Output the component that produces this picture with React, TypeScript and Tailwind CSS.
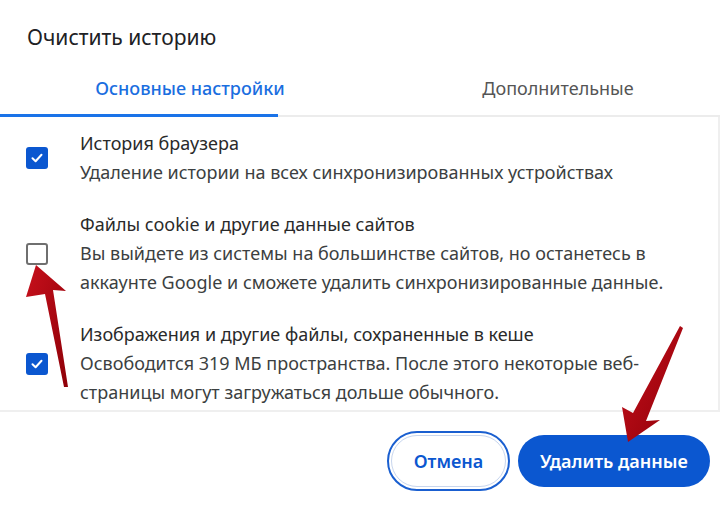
import React from "react";

const Check = ({ checked }: { checked: boolean }) =>
  checked ? (
    <div className="w-[22px] h-[22px] rounded-[3px] bg-[#0b57d0] flex items-center justify-center shrink-0">
      <svg width="14" height="14" viewBox="0 0 14 14">
        <path d="M2.5 7.3 L5.6 10.2 L11.5 3.8" fill="none" stroke="white" strokeWidth="2" strokeLinecap="round" strokeLinejoin="round" />
      </svg>
    </div>
  ) : (
    <div className="w-[22px] h-[22px] rounded-[3px] border-[2.5px] border-[#6f6f6f] bg-white shrink-0" />
  );

const Item = ({ checked, title, lines }: { checked: boolean; title: string; lines: string[] }) => (
  <div className="flex items-center">
    <div className="w-[80px] pl-[26px] flex">
      <Check checked={checked} />
    </div>
    <div className="text-[18px] leading-[29px] text-[#3c3f41]">
      <div className="text-[#2a2a2a]">{title}</div>
      {lines.map((l) => (
        <div key={l}>{l}</div>
      ))}
    </div>
  </div>
);

export default function App() {
  return (
    <div
      className="relative w-[720px] h-[507px] bg-white overflow-hidden"
      style={{ fontFamily: '"Noto Sans", "Open Sans", sans-serif' }}
    >
      <div className="pl-[27px] pt-[23px] text-[21px] leading-[28px] text-[#202124]">Очистить историю</div>
      <div className="mt-[12px] border-b-2 border-[#ececec]">
        <div className="flex h-[51px] items-center">
          <div className="w-[380px] text-center text-[18px] text-[#1a6ee0] font-medium">Основные настройки</div>
          <div className="flex-1 text-center text-[18px] text-[#555] pl-[16px]">Дополнительные</div>
        </div>
        <div className="w-[278px] h-[3px] bg-[#1a73e8] -mb-[2px]" />
      </div>
      <div className="h-[295px] border-r-2 border-b-2 border-[#efefef] pt-[12px] flex flex-col gap-[23px]">
        <Item checked title="История браузера" lines={["Удаление истории на всех синхронизированных устройствах"]} />
        <Item
          checked={false}
          title="Файлы cookie и другие данные сайтов"
          lines={["Вы выйдете из системы на большинстве сайтов, но останетесь в", "аккаунте Google и сможете удалить синхронизированные данные."]}
        />
        <Item
          checked
          title="Изображения и другие файлы, сохраненные в кеше"
          lines={["Освободится 319 МБ пространства. После этого некоторые веб-", "страницы могут загружаться дольше обычного."]}
        />
      </div>
      <div className="flex justify-end items-center gap-[8px] pr-[10px] pt-[19px]">
        <div className="rounded-full border-[2.5px] border-[#1a5fd0] p-[2px]">
          <div className="w-[115px] h-[52px] rounded-full border border-[#c8d6ee] flex items-center justify-center text-[18px] font-semibold text-[#0b57d0]">
            Отмена
          </div>
        </div>
        <div className="w-[192px] h-[52px] rounded-full bg-[#0b57d0] flex items-center justify-center text-[18px] font-semibold text-white">
          Удалить данные
        </div>
      </div>
      <svg className="absolute left-0 top-0 pointer-events-none" width="720" height="507" viewBox="0 0 720 507">
        <defs>
          <linearGradient id="ar" x1="0" y1="0" x2="1" y2="1">
            <stop offset="0" stopColor="#c8101c" />
            <stop offset="1" stopColor="#8e0008" />
          </linearGradient>
        </defs>
        <path d="M36 265 L66 291 L53 290 L68 387 L64 387 L45 294 L26 297 Z" fill="url(#ar)" />
        <path d="M628 442 L622 407 L633 413 L680 326 L683 328 L646 421 L660 420 Z" fill="url(#ar)" />
      </svg>
    </div>
  );
}
